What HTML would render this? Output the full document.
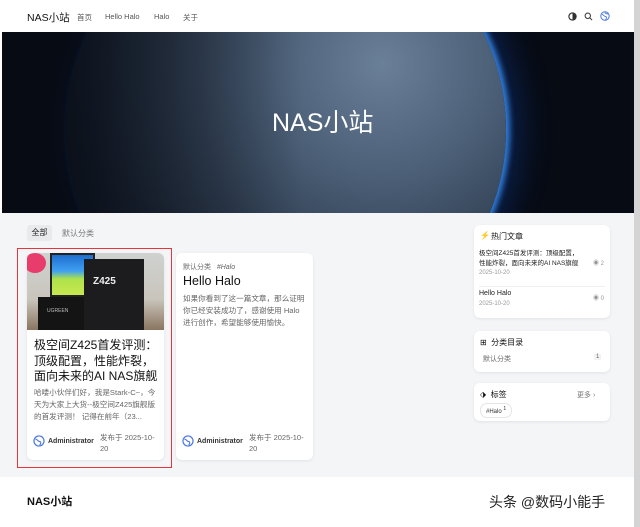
<!DOCTYPE html>
<html><head><meta charset="utf-8"><style>
*{margin:0;padding:0;box-sizing:border-box}
body{width:640px;height:527px;overflow:hidden;background:#fff;font-family:"Liberation Sans","Noto Sans CJK SC",sans-serif;position:relative;color:#111}
.a{position:absolute}
.sb{left:634px;top:0;width:6px;height:527px;background:#d4d4d4}
.hdr{left:0;top:0;width:634px;height:32px;background:#fff}
.ban{left:2px;top:32px;width:632px;height:181px;overflow:hidden;background:#070b14}
.main{left:0;top:213px;width:634px;height:264px;background:#f4f5f7}
.card{background:#fff;border-radius:6px;box-shadow:0 1px 3px rgba(0,0,0,.08)}
.t{font-size:8px;color:#666}
</style></head><body>
<div class="a sb"></div>
<div class="a hdr">
 <div class="a" style="left:27px;top:10px;font-size:10.5px;color:#111">NAS小站</div>
 <div class="a" style="left:77px;top:12px;font-size:7.5px;color:#555">首页</div>
 <div class="a" style="left:105px;top:12px;font-size:7.5px;color:#555">Hello Halo</div>
 <div class="a" style="left:154px;top:12px;font-size:7.5px;color:#555">Halo</div>
 <div class="a" style="left:183px;top:12px;font-size:7.5px;color:#555">关于</div>
 <svg class="a" style="left:568px;top:12px" width="9" height="9" viewBox="0 0 10 10"><circle cx="5" cy="5" r="4" fill="none" stroke="#333" stroke-width="1.3"/><path d="M5 1a4 4 0 0 1 0 8z" fill="#333"/></svg>
 <svg class="a" style="left:584px;top:12px" width="9" height="9" viewBox="0 0 10 10"><circle cx="4.2" cy="4.2" r="3" fill="none" stroke="#444" stroke-width="1.2"/><path d="M6.5 6.5L9 9" stroke="#444" stroke-width="1.2"/></svg>
 <svg class="a" style="left:600px;top:11px" width="10" height="10" viewBox="0 0 10 10"><circle cx="5" cy="5" r="4.2" fill="none" stroke="#4a78e0" stroke-width="1"/><path d="M2 3.5c2 0 2 2 3.5 2s1 2 0 3M5 1.2c0 1.5 1.5 1.5 3 1.8" fill="none" stroke="#4a78e0" stroke-width=".9"/></svg>
</div>
<div class="a ban">
 <div class="a" style="left:64px;top:-122px;width:440px;height:440px;border-radius:50%;background:radial-gradient(circle at 72% 35%,#6a8098 0%,#4d6179 25%,#2f3d50 50%,#161e2b 75%,#090d16 100%);box-shadow:3px 0 6px 1px rgba(60,150,255,.8),10px 0 30px 6px rgba(20,80,200,.3)"></div>
 <div class="a" style="left:0;top:0;width:300px;height:181px;background:linear-gradient(90deg,rgba(7,11,20,.95),rgba(7,11,20,.5) 40%,rgba(7,11,20,0))"></div>
 <div class="a" style="left:270px;top:71px;font-size:25px;color:#fff">NAS小站</div>
</div>
<div class="a main">
 <div class="a" style="left:27px;top:12px;width:25px;height:16px;background:#e9eaec;border-radius:3px;font-size:8px;text-align:center;line-height:16px;color:#222">全部</div>
 <div class="a" style="left:62px;top:15px;font-size:8px;color:#777">默认分类</div>
 <div class="a" style="left:17px;top:35px;width:155px;height:220px;border:1px solid #e8343c"></div>
 <div class="a card" style="left:27px;top:40px;width:137px;height:207px;overflow:hidden">
  <div class="a" style="left:0;top:0;width:137px;height:77px;background:linear-gradient(180deg,#cfd2d0 0%,#c9c5bc 60%,#8a7560 100%)">
   <div class="a" style="left:-3px;top:0;width:22px;height:20px;border-radius:50%;background:#e83c6c"></div>
   <div class="a" style="left:23px;top:0;width:45px;height:44px;background:linear-gradient(180deg,#1e6ed0 0%,#3fa0f0 40%,#aee24a 60%,#c8e850 100%);border:2px solid #222"></div>
   <div class="a" style="left:11px;top:44px;width:48px;height:33px;background:#141414"></div>
   <div class="a" style="left:20px;top:55px;font-size:5px;color:#bbb">UGREEN</div>
   <div class="a" style="left:57px;top:6px;width:60px;height:71px;background:#1c1c1e"></div>
   <div class="a" style="left:66px;top:23px;font-size:10px;font-weight:bold;color:#eee">Z425</div>
  </div>
  <div class="a" style="left:7px;top:85px;width:125px;font-size:12px;line-height:15.5px;color:#111">极空间Z425首发评测：顶级配置，性能炸裂，面向未来的AI NAS旗舰</div>
  <div class="a t" style="left:7px;top:134px;width:126px;line-height:12px;font-size:7.6px">哈喽小伙伴们好，我是Stark-C~，今天为大家上大货--极空间Z425旗舰版的首发评测！ 记得在前年（23...</div>
 </div>
 <div class="a card" style="left:176px;top:40px;width:137px;height:207px">
  <div class="a t" style="left:7px;top:9px;font-size:7px">默认分类 &nbsp;&nbsp;<i>#Halo</i></div>
  <div class="a" style="left:7px;top:21px;font-size:12.5px">Hello Halo</div>
  <div class="a t" style="left:7px;top:40px;width:126px;line-height:12px;font-size:7.6px">如果你看到了这一篇文章，那么证明你已经安装成功了，感谢使用 Halo 进行创作，希望能够使用愉快。</div>
 </div>
 <div class="a card" style="left:474px;top:12px;width:136px;height:93px">
  <div class="a" style="left:6px;top:6px;font-size:8px;color:#e03040">⚡</div>
  <div class="a" style="left:17px;top:6px;font-size:8px">热门文章</div>
  <div class="a" style="left:5px;top:24px;width:100px;font-size:6.5px;line-height:10px;color:#222">极空间Z425首发评测：顶级配置，性能炸裂，面向未来的AI NAS旗舰</div>
  <div class="a" style="left:5px;top:45px;font-size:6px;color:#999">2025-10-20</div>
  <div class="a" style="left:119px;top:33px;font-size:6px;color:#999">◉ 2</div>
  <div class="a" style="left:5px;top:61px;width:126px;border-top:1px solid #eee"></div>
  <div class="a" style="left:5px;top:65px;font-size:7px;color:#222">Hello Halo</div>
  <div class="a" style="left:5px;top:76px;font-size:6px;color:#999">2025-10-20</div>
  <div class="a" style="left:119px;top:68px;font-size:6px;color:#999">◉ 0</div>
 </div>
 <div class="a card" style="left:474px;top:118px;width:136px;height:41px">
  <div class="a" style="left:6px;top:6px;font-size:8px">⊞ &nbsp;分类目录</div>
  <div class="a" style="left:9px;top:23px;font-size:7px;color:#666">默认分类</div>
  <div class="a" style="left:120px;top:23px;font-size:6px;color:#666;background:#f2f2f2;padding:0 2px">1</div>
 </div>
 <div class="a card" style="left:474px;top:170px;width:136px;height:38px">
  <div class="a" style="left:6px;top:6px;font-size:8px">⬗ &nbsp;标签</div>
  <div class="a" style="left:103px;top:7px;font-size:7px;color:#777">更多 ›</div>
  <div class="a" style="left:6px;top:20px;font-size:6px;color:#333;border:1px solid #e5e5e5;border-radius:7px;padding:2px 5px">#Halo <sup style="font-size:5px">1</sup></div>
 </div>
</div>
<div class="a" style="left:36px;top:435px;font-size:7px;color:#333;font-weight:bold">
 <svg style="vertical-align:middle;margin-left:-3px;margin-right:3px" width="12" height="12" viewBox="0 0 10 10"><circle cx="5" cy="5" r="4.2" fill="none" stroke="#4a78e0"/><path d="M2 3.5c2 0 2 2 3.5 2s1 2 0 3" fill="none" stroke="#4a78e0" stroke-width=".9"/></svg>Administrator</div>
<div class="a t" style="left:100px;top:432px;width:56px;line-height:11px;font-size:7.5px">发布于 2025-10-20</div>
<div class="a" style="left:185px;top:435px;font-size:7px;color:#333;font-weight:bold">
 <svg style="vertical-align:middle;margin-left:-3px;margin-right:3px" width="12" height="12" viewBox="0 0 10 10"><circle cx="5" cy="5" r="4.2" fill="none" stroke="#4a78e0"/><path d="M2 3.5c2 0 2 2 3.5 2s1 2 0 3" fill="none" stroke="#4a78e0" stroke-width=".9"/></svg>Administrator</div>
<div class="a t" style="left:249px;top:432px;width:56px;line-height:11px;font-size:7.5px">发布于 2025-10-20</div>
<div class="a" style="left:27px;top:493px;font-size:11px;font-weight:bold">NAS小站</div>
<div class="a" style="left:489px;top:492px;font-size:14px;color:#222">头条 @数码小能手</div>
</body></html>
